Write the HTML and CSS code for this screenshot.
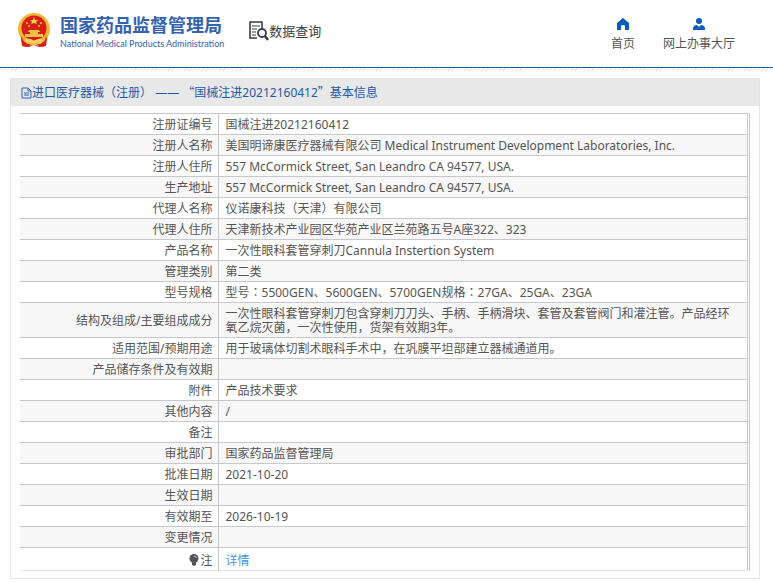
FILE: index.html
```html
<!DOCTYPE html>
<html lang="zh-CN">
<head>
  <meta charset="UTF-8" />
  <meta name="viewport" content="width=device-width, initial-scale=1.0" />
  <title>国家药品监督管理局 数据查询</title>
  <link rel="stylesheet" href="styles.css">
</head>
<body>
  <header class="header">
    <a class="logo" href="#">
      <svg class="emblem" viewBox="0 0 34 36" aria-hidden="true">
        <path d="M6 27 L5 34 L12 35 L17 33 L22 35 L29 34 L28 27 Z" fill="#cf2013"/>
        <circle cx="17" cy="17" r="16" fill="#f2b632"/>
        <circle cx="17" cy="16" r="12.500" fill="#d71f16"/>
        <path d="M17 5 L18 8 L21 8 L19 10 L20 12 L17 11 L14 12 L15 10 L13 8 L16 8 Z" fill="#fbd34b"/>
        <g fill="#f5c043">
          <circle cx="10" cy="11" r="1"/>
          <circle cx="24" cy="11" r="1"/>
          <circle cx="12" cy="14" r="1"/>
          <circle cx="22" cy="14" r="1"/>
          <path d="M12 18 H22 L23 20 H11 Z M13 20 H21 V22 H13 Z M8 22 H26 V25 H8 Z"/>
        </g>
        <path d="M5 24 Q6 31 10 35 L5 34 L4 27 Z M29 24 Q28 31 24 35 L29 34 L30 27 Z" fill="#d71f16"/>
        <path d="M8 28 Q12 25 17 29 Q22 25 26 28 L24 32 Q21 29 17 32 Q13 29 10 32 Z" fill="#f8d06a"/>
        <path d="M12 34 L17 31 L22 34 L17 33 Z" fill="#f5c043"/>
      </svg>
      <span class="logo-text">
        <span class="logo-cn">国家药品监督管理局</span>
        <span class="logo-en">National Medical Products Administration</span>
      </span>
    </a>
    <div class="section-name">
      <svg class="search-icon" viewBox="0 0 20 20" fill="none" stroke="#3a3b46" aria-hidden="true">
        <path d="M13 7 V1 H1 V17 H8" stroke-width="1.6"/>
        <path d="M3 5 H11 M3 8 H8 M3 11 H7 M3 14 H7" stroke-width="1.2"/>
        <circle cx="13" cy="12" r="4" stroke-width="1.800"/>
        <path d="M16 15 L19 19" stroke-width="2.400"/>
      </svg>
      <span>数据查询</span>
    </div>
    <nav class="nav">
      <a href="#">
        <svg viewBox="0 0 12 12" aria-hidden="true"><path d="M6 0 L12 5 V12 H8 V8 Q8 7 6 7 Q4 7 4 8 V12 H0 V5 Z" fill="#0a5cb8"/></svg>
        <span>首页</span>
      </a>
      <a href="#">
        <svg viewBox="0 0 12 12" aria-hidden="true"><circle cx="6" cy="3" r="3" fill="#0a5cb8"/><path d="M0 12 V10 Q1 7 4 7 L6 9 L8 7 Q11 7 12 10 V12 Z" fill="#0a5cb8"/></svg>
        <span>网上办事大厅</span>
      </a>
    </nav>
  </header>
  <div class="stripe"></div>

  <main class="panel">
    <h1 class="panel-title">
      <svg viewBox="0 0 11 12" fill="none" stroke="#2a62ae" aria-hidden="true"><path d="M1 1 H7 L10 4 V11 H1 Z M7 1 V4 H10 M3 6 H8 M3 8 H8"/></svg>
      <span>进口医疗器械<span class="wide" lang="zh-TW">（</span>注册<span class="wide" lang="zh-TW">）</span> —— <span class="quote">“</span>国械注进20212160412<span class="quote">”</span>基本信息</span>
    </h1>
    <div class="table-wrap">
      <table class="info">
        <tbody>
          <tr><th scope="row">注册证编号</th><td>国械注进20212160412</td></tr>
          <tr><th scope="row">注册人名称</th><td>美国明谛康医疗器械有限公司 Medical Instrument Development Laboratories, Inc.</td></tr>
          <tr><th scope="row">注册人住所</th><td>557 McCormick Street, San Leandro CA 94577, USA.</td></tr>
          <tr><th scope="row">生产地址</th><td>557 McCormick Street, San Leandro CA 94577, USA.</td></tr>
          <tr><th scope="row">代理人名称</th><td>仪诺康科技<span class="wide" lang="zh-TW">（</span>天津<span class="wide" lang="zh-TW">）</span>有限公司</td></tr>
          <tr><th scope="row">代理人住所</th><td>天津新技术产业园区华苑产业区兰苑路五号A座322、323</td></tr>
          <tr><th scope="row">产品名称</th><td>一次性眼科套管穿刺刀Cannula Instertion System</td></tr>
          <tr><th scope="row">管理类别</th><td>第二类</td></tr>
          <tr><th scope="row">型号规格</th><td>型号<span class="wide" lang="zh-TW">：</span>5500GEN、5600GEN、5700GEN规格<span class="wide" lang="zh-TW">：</span>27GA、25GA、23GA</td></tr>
          <tr><th scope="row">结构及组成/主要组成成分</th><td>一次性眼科套管穿刺刀包含穿刺刀刀头、手柄、手柄滑块、套管及套管阀门和灌注管。产品经环氧乙烷灭菌，一次性使用，货架有效期3年。</td></tr>
          <tr><th scope="row">适用范围/预期用途</th><td>用于玻璃体切割术眼科手术中，在巩膜平坦部建立器械通道用。</td></tr>
          <tr><th scope="row">产品储存条件及有效期</th><td></td></tr>
          <tr><th scope="row">附件</th><td>产品技术要求</td></tr>
          <tr><th scope="row">其他内容</th><td>/</td></tr>
          <tr><th scope="row">备注</th><td></td></tr>
          <tr><th scope="row">审批部门</th><td>国家药品监督管理局</td></tr>
          <tr><th scope="row">批准日期</th><td>2021-10-20</td></tr>
          <tr><th scope="row">生效日期</th><td></td></tr>
          <tr><th scope="row">有效期至</th><td>2026-10-19</td></tr>
          <tr><th scope="row">变更情况</th><td></td></tr>
          <tr class="note">
            <th scope="row"><svg viewBox="0 0 10 12" aria-hidden="true"><circle cx="5" cy="4.500" r="4.500" fill="#50555b"/><path d="M3 8 H7 V11 L5 12 L3 11 Z" fill="#50555b"/><path d="M5 2 Q7 2 7.500 4" fill="none" stroke="#c8cbce"/></svg>注</th>
            <td><a href="#">详情</a></td>
          </tr>
        </tbody>
      </table>
    </div>
  </main>
</body>
</html>
```

FILE: styles.css
```css
* {
  box-sizing: border-box;
}

body {
  margin: 0;
  background-color: #fff;
  color: #555;
  font-family: "Noto Sans", "Noto Sans CJK SC", sans-serif;
  font-size: 12px;
}

a {
  color: inherit;
  text-decoration: none;
}

.header {
  display: flex;
  align-items: flex-start;
  height: 68px;
  padding: 0 38px 0 17px;
  border-bottom: 1px solid #1d5f92;
}

.stripe {
  height: 3px;
  background: repeating-linear-gradient(135deg, #e8e8e8 0 1px, #fff 1px 3px);
}

.logo {
  display: flex;
  gap: 9px;
  padding-top: 12px;
}

.emblem {
  width: 34px;
  height: 36px;
}

.logo-text {
  display: flex;
  flex-direction: column;
  color: #3562ae;
}

.logo-cn {
  font-size: 18px;
  font-weight: 700;
  line-height: 26px;
}

.logo-en {
  font-family: Lato, sans-serif;
  font-size: 9px;
  font-weight: 400;
  line-height: 12px;
}

.section-name {
  display: flex;
  align-items: center;
  margin-left: 25px;
  padding-top: 20px;
  color: #3a3b46;
  font-size: 13px;
  line-height: 22px;
}

.search-icon {
  width: 20px;
  height: 20px;
}

.nav {
  display: flex;
  gap: 28px;
  margin-left: auto;
  padding-top: 18px;
}

.nav a {
  display: flex;
  flex-direction: column;
  align-items: center;
  gap: 5px;
  line-height: 18px;
}

.nav svg {
  width: 12px;
  height: 12px;
}

.panel {
  margin: 7px 13px 4px 10px;
  border: 1px solid #e4e4e4;
}

.panel-title {
  display: flex;
  align-items: center;
  height: 27px;
  margin: 0;
  padding-left: 10px;
  background-color: #e8e8e8;
  color: #1c59aa;
  font-size: 12px;
  font-weight: 400;
  line-height: 14px;
}

.panel-title svg {
  width: 11px;
  height: 12px;
}

/* centred brackets and colons */
.wide {
  font-family: "Noto Sans CJK TC", sans-serif;
  line-height: 10px;
}

/* full-width quotation marks */
.quote {
  font-family: "Noto Sans CJK SC", sans-serif;
}

.table-wrap {
  margin: 7px 9px;
  padding-right: 1px;
  border-right: 1px solid #c8c8cc;
}

.info {
  width: 100%;
  border-collapse: collapse;
  border-right: 1px solid #c8c8cc;
  border-bottom: 1px solid #e8e8e8;
}

.info th,
.info td {
  height: 21px;
  padding: 4px 6px 2px;
  border-top: 1px solid #c8c8cc;
  font-weight: 400;
  line-height: 14px;
}

.info th {
  width: 198px;
  padding-right: 5px;
  border-right: 1px solid #c8c8cc;
  text-align: right;
}

.info td {
  padding-right: 12px;
  padding-left: 7px;
  text-align: left;
}

.info tr:nth-child(even) {
  background-color: #f7f7f7;
}

.info .note th,
.info .note td {
  height: 23px;
  padding-top: 5px;
}

.note svg {
  width: 10px;
  height: 12px;
  margin-right: 1px;
  vertical-align: -1px;
}

.note a {
  color: #4593e6;
}
```
